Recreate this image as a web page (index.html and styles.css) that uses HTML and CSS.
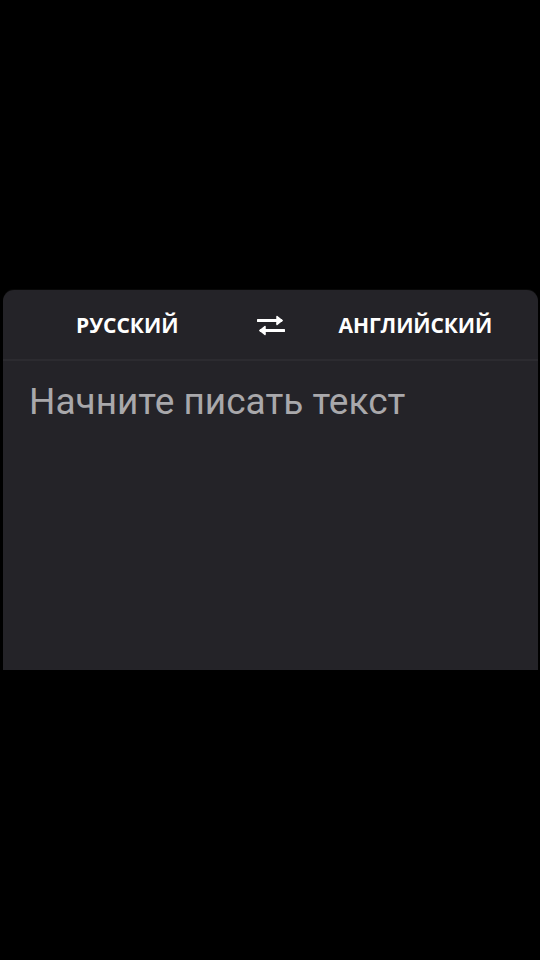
FILE: index.html
```html
<!DOCTYPE html>
<html lang="ru">
<head>
<meta charset="utf-8">
<link rel="stylesheet" href="styles.css">
</head>
<body>
<div class="screen">
  <div class="card">
    <div class="langs">
      <span class="lang lang-src">РУССКИЙ</span>
      <span class="swap">
        <svg width="28" height="22" viewBox="0 0 28 22">
          <path d="M1 6.5H24" stroke="#fff" stroke-width="3" stroke-linecap="round"/>
          <path d="M20 2.5L25 6.5L20 10.5Z" fill="#fff" stroke="#fff" stroke-width="1.5" stroke-linejoin="round"/>
          <path d="M4 16.5H27" stroke="#fff" stroke-width="3" stroke-linecap="round"/>
          <path d="M8 12.5L3 16.5L8 20.5Z" fill="#fff" stroke="#fff" stroke-width="1.5" stroke-linejoin="round"/>
        </svg>
      </span>
      <span class="lang lang-dst">АНГЛИЙСКИЙ</span>
    </div>
    <div class="input">Начните писать текст</div>
  </div>
</div>
</body>
</html>
```
FILE: styles.css
```css
html, body {
  margin: 0;
  padding: 0;
  background: #000;
}
.screen {
  width: 540px;
  height: 960px;
  padding-top: 290px;
  box-sizing: border-box;
}
.card {
  margin: 0 2px 0 3px;
  height: 380px;
  background: #242328;
  border-radius: 11px 11px 0 0;
  box-shadow: 0 -1px 0 rgba(255,255,255,0.03);
  display: flex;
  flex-direction: column;
}
.langs {
  height: 71px;
  border-bottom: 2px solid #2c2b30;
  display: flex;
  align-items: center;
  font-family: "Open Sans", sans-serif;
  font-weight: 700;
  font-size: 21px;
  color: #fff;
  padding-top: 1px;
  box-sizing: border-box;
}
.lang-src {
  margin-left: 73px;
}
.swap {
  margin-left: 78px;
  display: flex;
  align-items: center;
  height: 22px;
}
.lang-dst {
  margin-left: 54px;
  letter-spacing: -0.1px;
}
.input {
  padding: 19px 0 0 26px;
  font-family: Roboto, sans-serif;
  font-size: 37px;
  color: #a9a8ab;
}
```
